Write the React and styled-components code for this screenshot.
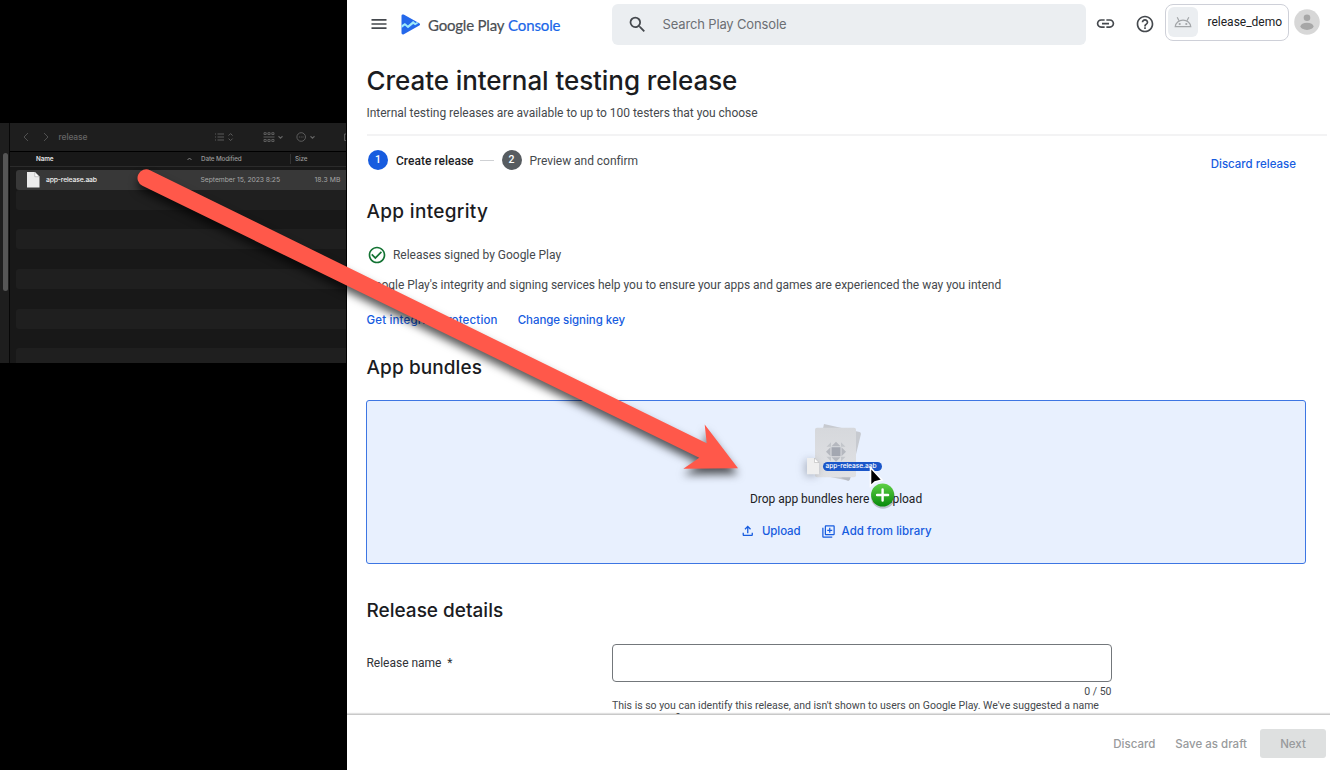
import React from "react";
import styled, { createGlobalStyle } from "styled-components";
import {
  MdMenu,
  MdSearch,
  MdLink,
  MdHelpOutline,
  MdCheckCircleOutline,
  MdOutlineFileUpload,
  MdOutlineLibraryAdd,
} from "react-icons/md";

const GlobalStyle = createGlobalStyle`
  *, *::before, *::after { box-sizing: border-box; }
  body { margin: 0; background: #fff; font-family: Roboto, "Liberation Sans", sans-serif; }
  button { border: 0; background: none; padding: 0; }
`;

const display = `font-family: Inter, "Liberation Sans", sans-serif; font-weight: 500;`;

const Screen = styled.div`
  position: relative;
  display: flex;
  width: 1330px;
  height: 770px;
  overflow: hidden;
  background: #fff;
`;

/* ---------- Finder window ---------- */

const Desktop = styled.aside`
  flex: 0 0 347px;
  height: 770px;
  padding-top: 123px;
  background: #000;
`;

const FinderWindow = styled.div`
  display: flex;
  width: 346px;
  height: 240px;
  overflow: hidden;
  background: #181818;
  font-family: Inter, "Liberation Sans", sans-serif;
`;

const FinderSidebar = styled.div`
  flex: 0 0 10px;
  padding: 30px 0 0 3px;
  background: #1e1e1e;
  border-right: 1px solid #070707;
`;

const ScrollThumb = styled.div`
  width: 5px;
  height: 138px;
  border-radius: 3px;
  background: #565656;
`;

const FinderBody = styled.div`
  flex: 1;
  min-width: 0;
`;

const FinderToolbar = styled.div`
  display: flex;
  align-items: center;
  height: 28.5px;
  padding-left: 12.5px;
  background: #1e1e1e;
  border-bottom: 1px solid #000;
  color: #666;
`;

const FinderTitle = styled.span`
  width: 155px;
  margin-left: -4px;
  font-size: 8.5px;
  font-weight: 500;
  letter-spacing: -0.12px;
`;

const ColumnHeads = styled.div`
  display: flex;
  align-items: center;
  height: 15.5px;
  padding-left: 26px;
  border-bottom: 1px solid #2b2b2b;
  font-size: 6.3px;
  font-weight: 500;
  letter-spacing: -0.12px;
  color: #9a9a9a;
`;

const ColumnHead = styled.span`
  width: ${(p) => p.$w}px;
  font-weight: ${(p) => (p.$active ? 600 : 500)};
  color: ${(p) => (p.$active ? "#e6e6e6" : "inherit")};
`;

const HeadRule = styled.i`
  width: 1px;
  height: 10px;
  margin-right: 4px;
  background: #333;
`;

const FileRows = styled.div`
  padding: 3px 0 0 5.5px;
`;

const FileRow = styled.div`
  display: flex;
  align-items: center;
  height: 19.83px;
  border-radius: 3px 0 0 3px;
  background: ${(p) => (p.$selected ? "#383838" : p.$striped ? "#1f1f1f" : "transparent")};
  font-size: 6.8px;
  color: #a6a6a6;
`;

const FileName = styled.span`
  width: 161px;
  padding-left: 6.5px;
  font-weight: 500;
  letter-spacing: -0.155px;
  color: #f2f2f2;
`;

const FileDate = styled.span`
  width: 114px;
  letter-spacing: -0.06px;
`;

const FileSize = styled.span`
  letter-spacing: 0.1px;
  white-space: nowrap;
`;

/* ---------- Console ---------- */

const Console = styled.main`
  position: relative;
  display: flex;
  flex-direction: column;
  width: 983px;
  height: 770px;
  color: #202124;
`;

const TopBar = styled.header`
  display: flex;
  align-items: center;
  flex: 0 0 49px;
  padding-left: 22px;
  color: #45494e;
`;

const MenuSlot = styled.span`
  display: flex;
  padding-bottom: 1px;
`;

const Brand = styled.div`
  display: flex;
  align-items: center;
  width: 210.5px;
  margin: -1px 0 0 12px;
  font: 400 15px/20px Lato, "Liberation Sans", sans-serif;
  white-space: pre;
`;

const BrandText = styled.span`
  width: ${(p) => p.$w}px;
  margin-left: ${(p) => p.$gap}px;
  padding-top: 1px;
  letter-spacing: ${(p) => p.$ls}px;
  color: ${(p) => (p.$blue ? "#1a66e8" : "#4a4e53")};
  -webkit-text-stroke: 0.2px currentColor;
`;

const SearchBox = styled.div`
  display: flex;
  align-items: center;
  width: 474px;
  height: 41px;
  padding-left: 15px;
  border-radius: 6px;
  background: #ebeef1;
  color: #45494e;
`;

const SearchHint = styled.span`
  margin: -1px 0 0 15px;
  font: 400 13px/20px Inter, "Liberation Sans", sans-serif;
  letter-spacing: -0.15px;
  color: #6b6f74;
`;

const IconSlot = styled.span`
  display: flex;
  margin-left: ${(p) => p.$gap}px;
  padding-bottom: 2px;
`;

const AppChip = styled.div`
  display: flex;
  align-items: center;
  width: 124px;
  height: 37px;
  margin: -5px 0 0 10px;
  padding-left: 2px;
  border: 1px solid #ced0d8;
  border-radius: 8px;
  font-size: 12px;
  color: #202124;
`;

const AppTile = styled.span`
  display: flex;
  align-items: center;
  justify-content: center;
  width: 30px;
  height: 30px;
  margin-right: 10px;
  border-radius: 6px;
  background: #ebeef1;
`;

const AppName = styled.span`
  padding-bottom: 1px;
`;

const Avatar = styled.span`
  display: flex;
  margin: -5px 0 0 5.5px;
`;

const Content = styled.div`
  display: flex;
  flex-direction: column;
  flex: 1;
  min-height: 0;
  padding-left: 19.5px;
  overflow: hidden;

  & > * {
    flex-shrink: 0;
  }
`;

const PageTitle = styled.h1`
  ${display}
  margin: 14px 0 0;
  font-size: 26px;
  line-height: 36px;
  letter-spacing: -0.07px;
  color: #1b1c1f;
`;

const Body = styled.p`
  margin: ${(p) => p.$top || 0}px 0 0;
  font-size: 12px;
  line-height: 18px;
  letter-spacing: -0.02px;
  white-space: nowrap;
  color: #45494d;
`;

const Rule = styled.div`
  width: 960px;
  height: 2px;
  margin-top: 12px;
  background: #f3f3f4;
`;

const Stepper = styled.div`
  display: flex;
  align-items: center;
  height: 20px;
  margin-top: 14px;
  padding-left: 1.5px;
  font-size: 12px;
`;

const StepDot = styled.span`
  width: 20px;
  height: 20px;
  border-radius: 50%;
  background: ${(p) => (p.$active ? "#175cdf" : "#575c60")};
  font-size: 10.5px;
  font-weight: 500;
  line-height: 20px;
  text-align: center;
  color: #fff;
`;

const StepLabel = styled.span`
  margin-left: 8px;
  padding-top: 2px;
  font-weight: ${(p) => (p.$active ? 500 : 400)};
  letter-spacing: ${(p) => (p.$active ? 0.01 : -0.04)}px;
  color: ${(p) => (p.$active ? "#1b1c1f" : "#45494d")};
`;

const StepLine = styled.i`
  width: 14px;
  height: 1px;
  margin: 0 8px 0 6px;
  background: #cfd1d4;
`;

const TextButton = styled.button`
  ${display}
  display: flex;
  align-items: center;
  font-size: 11.5px;
  line-height: 18px;
  letter-spacing: ${(p) => p.$ls || 0}px;
  color: #175cdf;
  white-space: nowrap;
`;

const DiscardRelease = styled(TextButton)`
  margin: 7px 34px 0 auto;
`;

const SectionTitle = styled.h2`
  ${display}
  margin: ${(p) => p.$top}px 0 0;
  font-size: 19px;
  line-height: 26px;
  letter-spacing: ${(p) => p.$ls || 0}px;
  color: #1b1c1f;
`;

const SignedRow = styled.div`
  display: flex;
  align-items: center;
  gap: 6.5px;
  height: 20px;
  margin-top: 20px;
  color: #137333;
`;

const LinkRow = styled.div`
  display: flex;
  gap: 20px;
  margin-top: 17px;
`;

const DropZone = styled.section`
  display: flex;
  flex-direction: column;
  align-items: center;
  width: 940px;
  height: 164px;
  margin: 19px 0 0 -0.5px;
  border: 1px solid #3d76e3;
  border-radius: 3px;
  background: #e8f0fe;
`;

const ArtBox = styled.div`
  height: 60px;
  margin-top: 21px;
`;

const DropHint = styled.p`
  margin: 8px 0 0;
  font-size: 12px;
  line-height: 18px;
  letter-spacing: -0.02px;
  color: #202124;
`;

const DropActions = styled.div`
  display: flex;
  gap: 20px;
  margin-top: 14px;
`;

const ButtonIcon = styled.span`
  display: flex;
  margin-right: 6px;
`;

const Field = styled.div`
  display: flex;
  margin-top: 20px;
`;

const FieldLabel = styled.label`
  width: 245.5px;
  padding-top: 10px;
  font-size: 12px;
  line-height: 18px;
  letter-spacing: -0.02px;
  white-space: pre;
  color: #303236;
`;

const FieldBody = styled.div`
  width: 499.5px;
  font-size: 10.5px;
  line-height: 13px;
  color: #45494d;
`;

const NameInput = styled.input`
  display: block;
  width: 499.5px;
  height: 38px;
  border: 1px solid #73777b;
  border-radius: 4px;
  background: #fff;
`;

const Counter = styled.div`
  margin-top: 3px;
  text-align: right;
`;

const Help = styled.div`
  margin-top: 1px;
  white-space: nowrap;
`;

const Footer = styled.footer`
  position: relative;
  display: flex;
  align-items: center;
  justify-content: flex-end;
  flex: 0 0 56px;
  gap: 20px;
  padding: 2px 4px 0 0;
  border-top: 1px solid #c9c9c9;
  box-shadow: 0 -1px 1px rgba(0, 0, 0, 0.12);
  background: #fff;
`;

const FooterButton = styled.button`
  ${display}
  padding-top: 1px;
  font-size: 11.5px;
  line-height: 16px;
  color: #989a9c;
`;

const NextButton = styled(FooterButton)`
  width: 66px;
  height: 29px;
  margin-left: -7px;
  border-radius: 3px;
  background: #dee0e0;
`;

/* ---------- Overlays ---------- */

const ArrowLayer = styled.svg`
  position: absolute;
  left: 0;
  top: 0;
  filter: drop-shadow(0 6px 4px rgba(0, 0, 0, 0.65));
`;

const DragGhost = styled.div`
  position: absolute;
  left: 805px;
  top: 456px;
  display: flex;
  width: 78px;
  height: 20px;
`;

const DragFile = styled.svg`
  filter: drop-shadow(-2px 2px 4px rgba(60, 65, 80, 0.35));
`;

const DragLabel = styled.span`
  height: 9px;
  width: 59.5px;
  margin: 5.5px 0 0 1.5px;
  padding-left: 3px;
  border-radius: 4.5px;
  background: #1a56c9;
  ${display}
  font-size: 6.6px;
  line-height: 9px;
  letter-spacing: -0.04px;
  color: #fff;
  white-space: nowrap;
`;

const PointerLayer = styled.svg`
  position: absolute;
  left: 862px;
  top: 462px;
`;

const FinderIcons = () => (
  <svg width="132" height="14" viewBox="0 0 132 14" fill="none" stroke="#626262" strokeWidth="0.9">
    <path d="M1 4h1M3.5 4h6.5M1 7h1M3.5 7h6.5M1 10h1M3.5 10h6.5" />
    <path d="M14.6 5.6l2-2 2 2M14.6 8.6l2 2 2-2" />
    <path d="M50 2.7h2.2v1.8H50zM53.9 2.7h2.2v1.8h-2.2zM57.8 2.7H60v1.8h-2.2zM49.5 7h11M50 9.5h2.2v2H50zM53.9 9.5h2.2v2h-2.2zM57.8 9.5H60v2h-2.2z" />
    <path d="M64.5 6.3l2 1.8 2-1.8" strokeWidth="1.2" />
    <circle cx="87.2" cy="7" r="4.3" />
    <path d="M84.9 7h1M86.7 7h1M88.5 7h1" />
    <path d="M96.5 6.3l2 1.8 2-1.8" strokeWidth="1.2" />
    <path d="M132 4h-1.5v6.5h1.5" />
  </svg>
);

const Chevron = ({ back }) => (
  <svg width="20" height="10" viewBox="0 0 20 10" fill="none" stroke="#505050">
    <path d={back ? "M5 1L1 5l4 4" : "M1 1l4 4-4 4"} />
  </svg>
);

const FileGlyph = () => (
  <svg width="12.5" height="15.5" viewBox="0 0 12.5 15.5">
    <path d="M0 0h7.8l4.7 4.7v10.8H0z" fill="#ececec" />
    <path d="M7.8 0v4.7h4.7z" fill="#fff" stroke="#999" strokeWidth="0.5" />
  </svg>
);

const PlayConsoleLogo = () => (
  <svg width="20" height="21" viewBox="0 0 20 21">
    <path d="M.5 1.7C.5.6 1.7.1 2.7.6l15.6 8.6c1 .6 1 1.7 0 2.2L2.8 20.2C1.7 20.8.5 20.2.5 19z" fill="#2468eb" />
    <path d="M.5 11.3l3.4-2.3 3 2.5 5.2-4.4 2.3 1.8 1.6-.9 1.5 1-3.3 2.3-2-1.4-5.2 4.3-3.1-2.6L.5 13.9z" fill="#9feafb" />
  </svg>
);

const AndroidHead = () => (
  <svg width="18" height="12" viewBox="0 0 18 12" fill="none" stroke="#a3a6a9" strokeWidth="1.2">
    <path d="M1.2 10.7C1.5 6.9 4.9 4.1 9 4.1s7.5 2.8 7.8 6.6z" />
    <path d="M5 4.7L3.2 1.3M13 4.7l1.8-3.4" />
    <circle cx="5.7" cy="8" r=".5" />
    <circle cx="12.3" cy="8" r=".5" />
  </svg>
);

const Person = () => (
  <svg width="26" height="26" viewBox="0 0 26 26">
    <circle cx="13" cy="13" r="12.8" fill="#d7d7d7" />
    <circle cx="13" cy="8.8" r="3.3" fill="#a7a7a7" />
    <ellipse cx="13" cy="17.3" rx="6.5" ry="3.6" fill="#a7a7a7" />
  </svg>
);

const BundleArt = () => (
  <svg width="60" height="60" viewBox="806 422 60 60">
    <defs>
      <linearGradient id="card" x1="0" y1="0" x2="0" y2="1">
        <stop offset="0" stopColor="#d6d8dc" />
        <stop offset="1" stopColor="#e0e1e4" />
      </linearGradient>
    </defs>
    <path d="M824 424L859.5 432q1.8.5 1.4 2.2L850 479q-.6 2-2.4 1.6L813 473.5z" fill="#c7cad0" />
    <path d="M841 478l7-5 4-3-2 9q-.6 2-2.4 1.6z" fill="#b5b9c1" />
    <rect x="815" y="427.7" width="41" height="49.5" rx="2" fill="url(#card)" />
    <g fill="#b5b8bf">
      <path d="M831 446.7v-4.5l-4.5 4.5zM841 446.7v-4.500l4.500 4.500zM831 456.700v4.500l-4.500-4.500zM841 456.700v4.500l4.500-4.500z" fill="#c3c6cb" />
      <path d="M831.5 446.2l4.500-4.500 4.500 4.500zM831.500 457.200l4.500 4.500 4.500-4.500zM830.500 447.200l-4.500 4.500 4.500 4.500zM841.500 447.200l4.500 4.500-4.500 4.500z" />
      <path d="M831.5 447.2h9v9h-9z" fill="#a3a7b1" />
    </g>
  </svg>
);

const stripes = [1, 2, 3, 4, 5, 6, 7, 8, 9];

export default function App() {
  return (
    <Screen>
      <GlobalStyle />
      <Desktop>
        <FinderWindow>
          <FinderSidebar>
            <ScrollThumb />
          </FinderSidebar>
          <FinderBody>
            <FinderToolbar>
              <Chevron back />
              <Chevron />
              <FinderTitle>release</FinderTitle>
              <FinderIcons />
            </FinderToolbar>
            <ColumnHeads>
              <ColumnHead $w={151} $active>Name</ColumnHead>
              <svg width="5" height="4" viewBox="0 0 5 4" fill="none" stroke="#999" strokeWidth="0.8">
                <path d="M.5 3l2-2 2 2" />
              </svg>
              <ColumnHead $w={9} />
              <ColumnHead $w={89}>Date Modified</ColumnHead>
              <HeadRule />
              <ColumnHead $w={40}>Size</ColumnHead>
            </ColumnHeads>
            <FileRows>
              <FileRow $selected>
                <ColumnHead $w={11.5} />
                <FileGlyph />
                <FileName>app-release.aab</FileName>
                <FileDate>September 15, 2023 8:25</FileDate>
                <FileSize>18.3 MB</FileSize>
              </FileRow>
              {stripes.map((n) => (
                <FileRow key={n} $striped={n % 2 === 1} />
              ))}
            </FileRows>
          </FinderBody>
        </FinderWindow>
      </Desktop>

      <Console>
        <TopBar>
          <MenuSlot><MdMenu size={20} /></MenuSlot>
          <Brand>
            <PlayConsoleLogo />
            <BrandText $w={79} $gap={7} $ls={-0.2}>Google Play</BrandText>
            <BrandText $w={54} $gap={1} $ls={-0.12} $blue>Console</BrandText>
          </Brand>
          <SearchBox>
            <MdSearch size={21} />
            <SearchHint>Search Play Console</SearchHint>
          </SearchBox>
          <IconSlot $gap={9}><MdLink size={21} /></IconSlot>
          <IconSlot $gap={19}><MdHelpOutline size={20} /></IconSlot>
          <AppChip>
            <AppTile><AndroidHead /></AppTile>
            <AppName>release_demo</AppName>
          </AppChip>
          <Avatar><Person /></Avatar>
        </TopBar>

        <Content>
          <PageTitle>Create internal testing release</PageTitle>
          <Body $top={5}>Internal testing releases are available to up to 100 testers that you choose</Body>
          <Rule />
          <Stepper>
            <StepDot $active>1</StepDot>
            <StepLabel $active>Create release</StepLabel>
            <StepLine />
            <StepDot>2</StepDot>
            <StepLabel>Preview and confirm</StepLabel>
            <DiscardRelease>Discard release</DiscardRelease>
          </Stepper>

          <SectionTitle $top={29} $ls={0.32}>App integrity</SectionTitle>
          <SignedRow>
            <MdCheckCircleOutline size={20} />
            <Body>Releases signed by Google Play</Body>
          </SignedRow>
          <Body $top={11}>
            Google Play's integrity and signing services help you to ensure your apps and games are experienced the way you intend
          </Body>
          <LinkRow>
            <TextButton $ls={0.16}>Get integrity protection</TextButton>
            <TextButton $ls={-0.05}>Change signing key</TextButton>
          </LinkRow>

          <SectionTitle $top={26} $ls={0.09}>App bundles</SectionTitle>
          <DropZone>
            <ArtBox><BundleArt /></ArtBox>
            <DropHint>Drop app bundles here to upload</DropHint>
            <DropActions>
              <TextButton $ls={-0.1}>
                <ButtonIcon><MdOutlineFileUpload size={15.5} /></ButtonIcon>
                Upload
              </TextButton>
              <TextButton $ls={0.05}>
                <ButtonIcon><MdOutlineLibraryAdd size={15} /></ButtonIcon>
                Add from library
              </TextButton>
            </DropActions>
          </DropZone>

          <SectionTitle $top={34}>Release details</SectionTitle>
          <Field>
            <FieldLabel>Release name  *</FieldLabel>
            <FieldBody>
              <NameInput />
              <Counter>0 / 50</Counter>
              <Help>
                This is so you can identify this release, and isn't shown to users on Google Play. We've suggested a name
                <br />
                based on the first app bundle or APK in this release, but you can edit it.
              </Help>
            </FieldBody>
          </Field>
        </Content>

        <Footer>
          <FooterButton>Discard</FooterButton>
          <FooterButton>Save as draft</FooterButton>
          <NextButton>Next</NextButton>
        </Footer>
      </Console>

      <ArrowLayer width="1330" height="770" viewBox="0 0 1330 770">
        <path
          d="M150 170.2L706.7 443.3L704.7 424.5L738 468.2L683.3 468.7L699.3 457.7L142.4 185.8A8.65 8.65 0 0 1 150 170.2Z"
          fill="#ff584a"
        />
      </ArrowLayer>

      <DragGhost>
        <DragFile width="16" height="20" viewBox="0 0 16 20">
          <path d="M2 2h7.5l4.5 4.5V18.3H2z" fill="#efefef" />
          <path d="M9.5 2v4.5H14z" fill="#fff" stroke="#aaa" strokeWidth="0.5" />
        </DragFile>
        <DragLabel>app-release.aab</DragLabel>
      </DragGhost>

      <PointerLayer width="40" height="52" viewBox="862 462 40 52">
        <defs>
          <linearGradient id="badge" x1="0" y1="0" x2="0" y2="1">
            <stop offset="0" stopColor="#5fd045" />
            <stop offset="1" stopColor="#078a0b" />
          </linearGradient>
        </defs>
        <path d="M870.5 467.5V486L874.9 482L882 480Z" fill="#000" stroke="#fff" strokeWidth="1.6" />
        <ellipse cx="883" cy="497" rx="12" ry="11.8" fill="#000" opacity=".2" />
        <circle cx="882.6" cy="495" r="11.5" fill="url(#badge)" />
        <path d="M882.6 489.5v11M877.1 495h11" stroke="#fff" strokeWidth="2.4" strokeLinecap="round" />
      </PointerLayer>
    </Screen>
  );
}
